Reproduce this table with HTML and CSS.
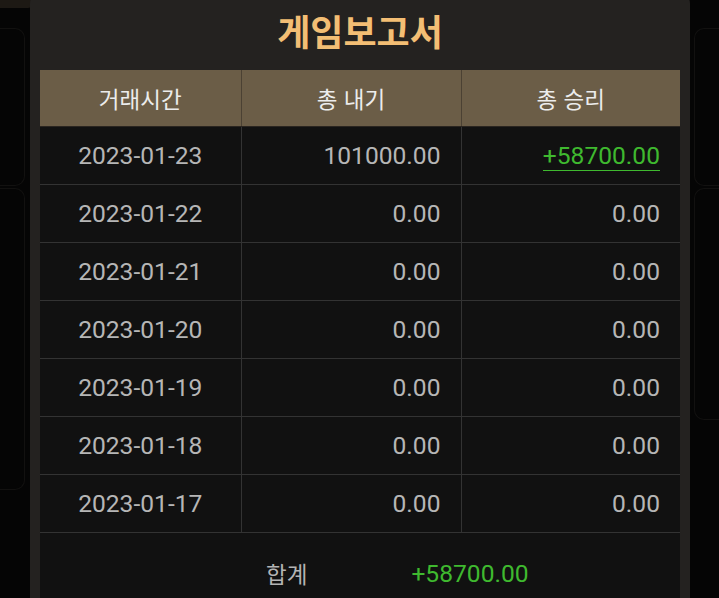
FILE: index.html
```html
<!DOCTYPE html>
<html lang="ko">
<head>
<meta charset="utf-8">
<title>게임보고서</title>
<link rel="stylesheet" href="styles.css">
</head>
<body>
<div class="backdrop">
  <div class="ghost ghost-top"></div>
  <div class="ghost ghost-l1"></div>
  <div class="ghost ghost-l2"></div>
  <div class="ghost ghost-r1"></div>
  <div class="ghost ghost-r2"></div>
</div>
<div class="modal">
  <h1 class="title">게임보고서</h1>
  <table class="report">
    <colgroup><col class="c1"><col class="c2"><col class="c3"></colgroup>
    <thead>
      <tr><th>거래시간</th><th>총 내기</th><th>총 승리</th></tr>
    </thead>
    <tbody>
      <tr><td class="date">2023-01-23</td><td class="num">101000.00</td><td class="num"><span class="win">+58700.00</span></td></tr>
      <tr><td class="date">2023-01-22</td><td class="num">0.00</td><td class="num">0.00</td></tr>
      <tr><td class="date">2023-01-21</td><td class="num">0.00</td><td class="num">0.00</td></tr>
      <tr><td class="date">2023-01-20</td><td class="num">0.00</td><td class="num">0.00</td></tr>
      <tr><td class="date">2023-01-19</td><td class="num">0.00</td><td class="num">0.00</td></tr>
      <tr><td class="date">2023-01-18</td><td class="num">0.00</td><td class="num">0.00</td></tr>
      <tr><td class="date">2023-01-17</td><td class="num">0.00</td><td class="num">0.00</td></tr>
    </tbody>
  </table>
  <div class="total">
    <span class="total-label">합계</span>
    <span class="total-value">+58700.00</span>
  </div>
</div>
</body>
</html>
```

FILE: styles.css
```css
html, body {
  margin: 0;
  padding: 0;
  background: #050505;
  height: 100%;
  overflow: hidden;
  font-family: Roboto, "Noto Sans CJK KR", sans-serif;
}

.backdrop {
  position: absolute;
  inset: 0;
  overflow: hidden;
}

.ghost {
  position: absolute;
  border: 1px solid #121110;
  border-radius: 10px;
}

.ghost-top {
  left: 0;
  top: 0;
  width: 34px;
  height: 8px;
  background: #1d1914;
  border: none;
  border-radius: 0 0 6px 0;
}

.ghost-l1 { left: 0; top: 28px; width: 24px; height: 156px; border-left: none; border-radius: 0 10px 10px 0; }
.ghost-l2 { left: 0; top: 188px; width: 24px; height: 300px; border-left: none; border-radius: 0 10px 10px 0; }
.ghost-r1 { left: 694px; top: 28px; width: 25px; height: 156px; border-right: none; border-radius: 10px 0 0 10px; }
.ghost-r2 { left: 694px; top: 188px; width: 25px; height: 230px; border-right: none; border-radius: 10px 0 0 10px; }

.modal {
  position: relative;
  margin: -10px 0 0 30px;
  width: 640px;
  padding: 10px 10px 0;
  height: 620px;
  background: #242220;
  border-radius: 14px 14px 0 0;
}

.title {
  position: relative;
  margin: 0;
  height: 70px;
  box-sizing: border-box;
  padding-top: 5px;
  text-align: center;
  font-family: "Noto Sans CJK KR", sans-serif;
  font-weight: 700;
  font-size: 36px;
  line-height: 50px;
  color: #f3be74;
}

.report {
  position: relative;
  width: 640px;
  border-collapse: collapse;
  table-layout: fixed;
  background: #111111;
}

.c1 { width: 201px; }
.c2 { width: 220px; }
.c3 { width: 219px; }

.report th {
  height: 56px;
  padding: 0;
  background: #6b5d47;
  color: #ececec;
  font-family: "Noto Sans CJK KR", sans-serif;
  font-weight: 400;
  font-size: 22.5px;
  border-left: 1px solid #4b4133;
  border-bottom: 1px solid #2a2520;
}

.report th:first-child { border-left: none; }

.report td {
  height: 57px;
  padding: 0 20px;
  font-size: 24.6px;
  color: #b6b6b6;
  border-top: 1px solid #333;
  border-left: 1px solid #333;
}

.report tbody tr:first-child td { border-top: none; }
.report td:first-child { border-left: none; }

.report td.date { text-align: center; padding: 0; }
.report td.num { text-align: right; }

.win {
  color: #3fb92f;
  border-bottom: 1px solid #3fb92f;
  padding-bottom: 0;
}

.total {
  position: relative;
  display: flex;
  align-items: center;
  gap: 104px;
  height: 80px;
  padding-left: 226px;
  background: #111111;
  border-top: 1px solid #333;
}

.total-label {
  font-family: "Noto Sans CJK KR", sans-serif;
  font-size: 22.5px;
  color: #b4b4b4;
}

.total-value {
  font-size: 24.6px;
  color: #3fb92f;
}
```
